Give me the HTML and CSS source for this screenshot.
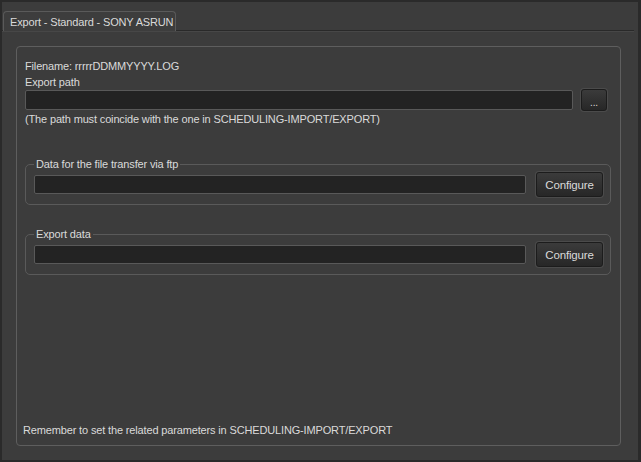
FILE: index.html
```html
<!DOCTYPE html>
<html>
<head>
<meta charset="utf-8">
<link rel="stylesheet" href="styles.css">
</head>
<body>
<div class="window">
  <div class="tabs">
    <div class="tab">Export - Standard - SONY ASRUN</div>
  </div>
  <div class="pane">
    <div class="frame">
      <div class="line first">Filename: rrrrrDDMMYYYY.LOG</div>
      <div class="line">Export path</div>
      <div class="row path-row">
        <div class="input"></div>
        <button class="btn dots">...</button>
      </div>
      <div class="line">(The path must coincide with the one in SCHEDULING-IMPORT/EXPORT)</div>
      <fieldset class="group first-group">
        <legend>Data for the file transfer via ftp</legend>
        <div class="row">
          <div class="input small"></div>
          <button class="btn configure">Configure</button>
        </div>
      </fieldset>
      <fieldset class="group">
        <legend>Export data</legend>
        <div class="row">
          <div class="input small"></div>
          <button class="btn configure">Configure</button>
        </div>
      </fieldset>
      <div class="line note">Remember to set the related parameters in SCHEDULING-IMPORT/EXPORT</div>
    </div>
  </div>
</div>
</body>
</html>
```
FILE: styles.css
```css
html, body {
  margin: 0;
  padding: 0;
  background: #3c3c3c;
}
body {
  font-family: "Liberation Sans", Arial, sans-serif;
  font-size: 11px;
  letter-spacing: -0.15px;
  color: #dadada;
}
.window {
  width: 641px;
  height: 462px;
  box-sizing: border-box;
  border-style: solid;
  border-color: #2a2a2a;
  border-width: 2px 3px 2px 2px;
  background: #3c3c3c;
  display: flex;
  flex-direction: column;
}
.tabs {
  display: flex;
  padding: 9px 0 0 1px;
  margin-right: 4px;
  border-bottom: 1px solid #292929;
  box-shadow: 0 1px 0 #474747;
}
.tab {
  box-sizing: border-box;
  width: 173px;
  height: 20px;
  line-height: 20px;
  padding-left: 6px;
  border: 1px solid #5a5a5a;
  border-bottom: none;
  border-radius: 4px 4px 0 0;
  margin-bottom: -1px;
  background: #3d3d3d;
  white-space: nowrap;
}
.pane {
  flex: 1;
  display: flex;
  flex-direction: column;
  padding: 15px 17px 14px 14px;
}
.frame {
  flex: 1;
  display: flex;
  flex-direction: column;
  border: 1px solid #5e5e5e;
  border-radius: 4px;
  padding: 11px 9px 7px 8px;
}
.line {
  line-height: 16px;
  white-space: nowrap;
}
.row {
  display: flex;
  align-items: center;
}
.path-row {
  height: 23px;
  gap: 8px;
  margin-right: 4px;
  margin-top: -2px;
}
.input {
  flex: 1;
  box-sizing: border-box;
  height: 20px;
  background: #232323;
  border: 1px solid #595959;
  border-radius: 2px;
}
.input.small {
  height: 19px;
}
.btn {
  box-sizing: border-box;
  font-family: inherit;
  font-size: 11px;
  letter-spacing: -0.15px;
  color: #dadada;
  background: linear-gradient(#3b3b3b, #272727);
  border: 1px solid #1c1c1c;
  border-radius: 3px;
  box-shadow: 0 0 0 1px #4b4b4b;
  padding: 0;
  margin: 0;
}
.dots {
  width: 26px;
  height: 22px;
  line-height: 26px;
  font-size: 10px;
}
.configure {
  width: 67px;
  height: 25px;
  font-size: 11.5px;
}
.group {
  margin: 0;
  border: 1px solid #5a5a5a;
  border-radius: 5px;
  padding: 1px 7px 7px 8px;
}
.group .row {
  gap: 10px;
}
.group legend {
  padding: 0 2px;
  margin-left: 0;
  line-height: 14px;
}
.first-group {
  margin-top: 30px;
}
.group + .group {
  margin-top: 22px;
}
.note {
  margin-top: auto;
  margin-left: -2px;
}
```
